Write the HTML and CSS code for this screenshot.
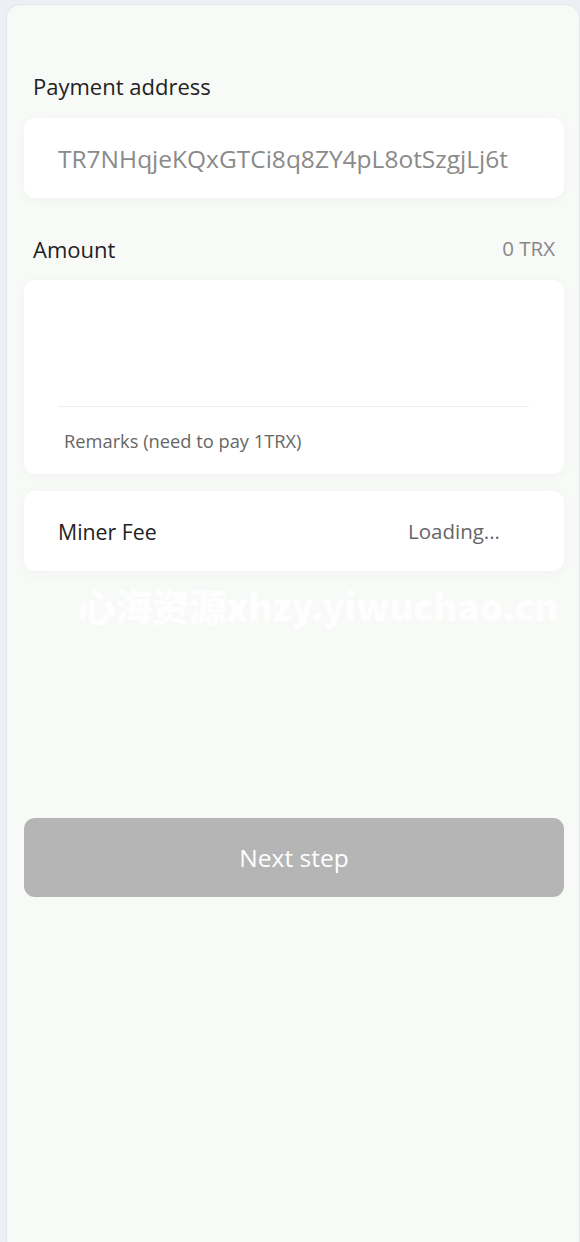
FILE: index.html
```html
<!DOCTYPE html>
<html lang="en">
<head>
<meta charset="utf-8">
<title>Transfer</title>
<link rel="stylesheet" href="styles.css">
</head>
<body>
<div class="panel">
  <div class="label-row first">
    <span class="label">Payment address</span>
  </div>
  <div class="card address-card">
    <span class="address">TR7NHqjeKQxGTCi8q8ZY4pL8otSzgjLj6t</span>
  </div>

  <div class="label-row">
    <span class="label">Amount</span>
    <span class="balance">0 TRX</span>
  </div>
  <div class="card amount-card">
    <div class="amount-input"></div>
    <div class="remarks">Remarks (need to pay 1TRX)</div>
  </div>

  <div class="card fee-card">
    <span class="fee-label">Miner Fee</span>
    <span class="fee-value">Loading...</span>
  </div>

  <div class="watermark">心海资源xhzy.yiwuchao.cn</div>

  <button class="next-btn" type="button">Next step</button>
</div>
</body>
</html>
```

FILE: styles.css
```css
* { box-sizing: border-box; }
html, body {
  margin: 0;
  padding: 0;
  height: 100%;
  overflow: hidden;
}
body {
  background: #ecf0f6;
  font-family: "Open Sans", "Noto Sans", "Noto Sans CJK SC", sans-serif;
  padding: 4px 0 0 6px;
}
.panel {
  position: relative;
  width: 574px;
  height: 1250px;
  background: #f8faf8;
  border: 1px solid #e4e6e6;
  border-radius: 14px;
  padding: 0 15px 0 17px;
}
.label-row {
  display: flex;
  justify-content: space-between;
  align-items: flex-end;
  padding: 0 9px 16px 9px;
  height: 82px;
  line-height: 30px;
}
.label-row.first {
  height: 113px;
  padding-bottom: 17px;
}
.label {
  font-size: 22px;
  color: #222;
}
.balance {
  font-size: 20.5px;
  color: #888;
  position: relative;
  top: -1px;
}
.card {
  background: #fff;
  border-radius: 11px;
  box-shadow: 0 2px 12px rgba(0, 0, 0, 0.035);
}
.address-card {
  height: 80px;
  display: flex;
  align-items: center;
  padding-left: 34px;
}
.address {
  font-size: 24.5px;
  color: #8a8a8a;
}
.amount-card {
  height: 194px;
  padding: 0 35px 0 34px;
  display: flex;
  flex-direction: column;
}
.amount-input {
  height: 127px;
  border-bottom: 1px solid #eeeeee;
}
.remarks {
  padding-left: 6px;
  margin-top: 21px;
  font-size: 18.3px;
  color: #666;
}
.fee-card {
  margin-top: 17px;
  height: 80px;
  display: flex;
  justify-content: space-between;
  align-items: center;
  padding: 0 64px 0 34px;
}
.fee-label {
  font-size: 21.3px;
  color: #222;
}
.fee-value {
  font-size: 20.5px;
  color: #666;
}
.watermark {
  position: absolute;
  left: 71px;
  top: 572px;
  font-family: "Noto Sans CJK SC", sans-serif;
  font-weight: 900;
  font-size: 37.5px;
  color: rgba(255, 255, 255, 0.9);
  white-space: nowrap;
  letter-spacing: -0.5px;
}
.next-btn {
  display: block;
  width: 100%;
  margin-top: 247px;
  height: 79px;
  border: none;
  border-radius: 11px;
  background: #b5b5b5;
  color: #fff;
  font-family: inherit;
  font-size: 24.5px;
}
```
